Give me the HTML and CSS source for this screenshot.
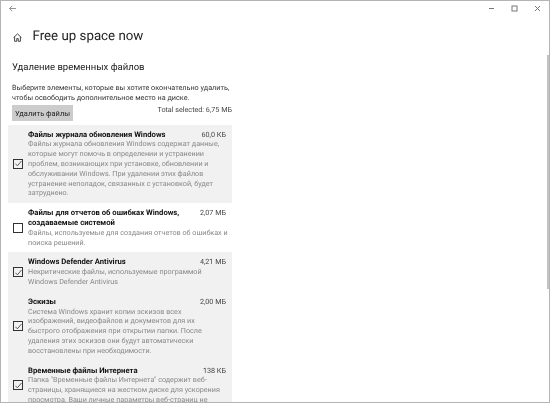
FILE: index.html
```html
<!DOCTYPE html>
<html lang="ru">
<head>
<meta charset="utf-8">
<title>Free up space now</title>
<link rel="stylesheet" href="styles.css">
</head>
<body>
<div class="window">
  <div class="titlebar">
    <svg class="back" width="7" height="7" viewBox="0 0 7 7"><path d="M3.2 .8 .6 3.5l2.6 2.7M.6 3.5H7" fill="none" stroke="#777" stroke-width=".8"/></svg>
    <div class="controls">
      <svg width="7" height="7" viewBox="0 0 7 7"><path d="M1 3.5h5" stroke="#777" stroke-width="1"/></svg>
      <svg width="7" height="7" viewBox="0 0 7 7"><rect x="1" y="1" width="5" height="5" fill="none" stroke="#777" stroke-width="1"/></svg>
      <svg width="7" height="7" viewBox="0 0 7 7"><path d="M1 1l5 5M6 1 1 6" stroke="#777" stroke-width="1"/></svg>
    </div>
  </div>
  <div class="body">
    <div class="content">
      <div class="page-head">
        <svg class="home" width="9" height="9" viewBox="0 0 10 10"><path d="M.6 5.2 5 1l4.4 4.2M1.8 4.2V9.2h2.4V6.2h1.6v3h2.4V4.2" fill="none" stroke="#333" stroke-width="1"/></svg>
        <h1>Free up space now</h1>
      </div>
      <h2>Удаление временных файлов</h2>
      <p class="intro">Выберите элементы, которые вы хотите окончательно удалить,<br>чтобы освободить дополнительное место на диске.</p>
      <div class="actions">
        <button class="delete">Удалить файлы</button>
        <span class="total">Total selected: 6,75 МБ</span>
      </div>
      <div class="list">
        <div class="item on">
          <span class="box"><svg width="9" height="9" viewBox="0 0 9 9"><path d="M1.5 4.8 3.4 6.8 7.5 2" fill="none" stroke="#333" stroke-width=".8"/></svg></span>
          <div class="info">
            <div class="row"><strong>Файлы журнала обновления Windows</strong><span class="size">60,0 КБ</span></div>
            <p>Файлы журнала обновления Windows содержат данные,<br>которые могут помочь в определении и устранении<br>проблем, возникающих при установке, обновлении и<br>обслуживании Windows. При удалении этих файлов<br>устранение неполадок, связанных с установкой, будет<br>затруднено.</p>
          </div>
        </div>
        <div class="item">
          <span class="box"></span>
          <div class="info">
            <div class="row"><strong>Файлы для отчетов об ошибках Windows,<br>создаваемые системой</strong><span class="size">2,07 МБ</span></div>
            <p>Файлы, используемые для создания отчетов об ошибках и<br>поиска решений.</p>
          </div>
        </div>
        <div class="item on">
          <span class="box"><svg width="9" height="9" viewBox="0 0 9 9"><path d="M1.5 4.8 3.4 6.8 7.5 2" fill="none" stroke="#333" stroke-width=".8"/></svg></span>
          <div class="info">
            <div class="row"><strong>Windows Defender Antivirus</strong><span class="size">4,21 МБ</span></div>
            <p>Некритические файлы, используемые программой<br>Windows Defender Antivirus</p>
          </div>
        </div>
        <div class="item on">
          <span class="box"><svg width="9" height="9" viewBox="0 0 9 9"><path d="M1.5 4.8 3.4 6.8 7.5 2" fill="none" stroke="#333" stroke-width=".8"/></svg></span>
          <div class="info">
            <div class="row"><strong>Эскизы</strong><span class="size">2,00 МБ</span></div>
            <p>Система Windows хранит копии эскизов всех<br>изображений, видеофайлов и документов для их<br>быстрого отображения при открытии папки. После<br>удаления этих эскизов они будут автоматически<br>восстановлены при необходимости.</p>
          </div>
        </div>
        <div class="item on">
          <span class="box"><svg width="9" height="9" viewBox="0 0 9 9"><path d="M1.5 4.8 3.4 6.8 7.5 2" fill="none" stroke="#333" stroke-width=".8"/></svg></span>
          <div class="info">
            <div class="row"><strong>Временные файлы Интернета</strong><span class="size">138 КБ</span></div>
            <p>Папка "Временные файлы Интернета" содержит веб-<br>страницы, хранящиеся на жестком диске для ускорения<br>просмотра. Ваши личные параметры веб-страниц не</p>
          </div>
        </div>
      </div>
    </div>
    <div class="scroll"><div class="thumb"></div></div>
  </div>
</div>
</body>
</html>
```
FILE: styles.css
```css
* { box-sizing: border-box; }
html, body { margin: 0; height: 100%; overflow: hidden; background: #fff; }
body { font-family: Roboto, "Noto Sans", sans-serif; color: #222; text-rendering: geometricPrecision; }
.window {
  width: 550px; height: 403px;
  border: 1px solid #b4b4b4;
  display: flex; flex-direction: column; overflow: hidden;
  filter: blur(.3px);
}
.titlebar { height: 15px; flex: none; display: flex; justify-content: space-between; align-items: center; padding: 0 8px 0 8px; }
.back { display: block; }
.controls { display: flex; gap: 15.8px; }
.controls svg { display: block; }
.body { flex: 1; display: flex; min-height: 0; }
.content { width: 224px; margin-left: 7px; overflow: hidden; }
.page-head { display: flex; align-items: center; gap: 10.5px; padding: 10px 0 0 5px; height: 32px; }
h1 { margin: 0; font-size: 13.3px; font-weight: 400; color: #222; line-height: 20px; }
h2 { margin: 13px 0 0 4px; font-size: 9.5px; font-weight: 400; color: #222; line-height: 14px; }
.intro { margin: 8px 0 0 4px; font-size: 7.25px; line-height: 9.8px; color: #333; white-space: nowrap; }
.actions { display: flex; justify-content: space-between; align-items: flex-start; margin: 2.5px 0 0 4px; }
.delete { width: 61px; height: 16px; background: #ccc; border: 0; padding: 0; font: inherit; font-size: 7.5px; color: #222; }
.total { font-size: 7.2px; color: #444; line-height: 10px; }
.list { margin-top: 3.5px; }
.item { display: flex; align-items: center; padding: 5px 6px 5px 5px; }
.item.on { background: #f1f1f1; }
.box { flex: none; width: 10px; height: 10px; border: 1.2px solid #333; margin-right: 5px; display: flex; align-items: center; justify-content: center; }
.box svg { display: block; flex: none; margin: -1px; }
.info { flex: 1; min-width: 0; }
.row { display: flex; justify-content: space-between; font-size: 7.7px; line-height: 9.8px; }
strong { font-weight: 700; color: #111; }
.size { color: #444; white-space: nowrap; font-size: 7.2px; }
.info p { margin: 0; font-size: 7.2px; line-height: 9.8px; color: #888; white-space: nowrap; }
.scroll { margin-left: auto; width: 2px; flex: none; padding-top: 39px; }
.thumb { height: 234px; width: 2px; background: #c2c2c2; }
```
